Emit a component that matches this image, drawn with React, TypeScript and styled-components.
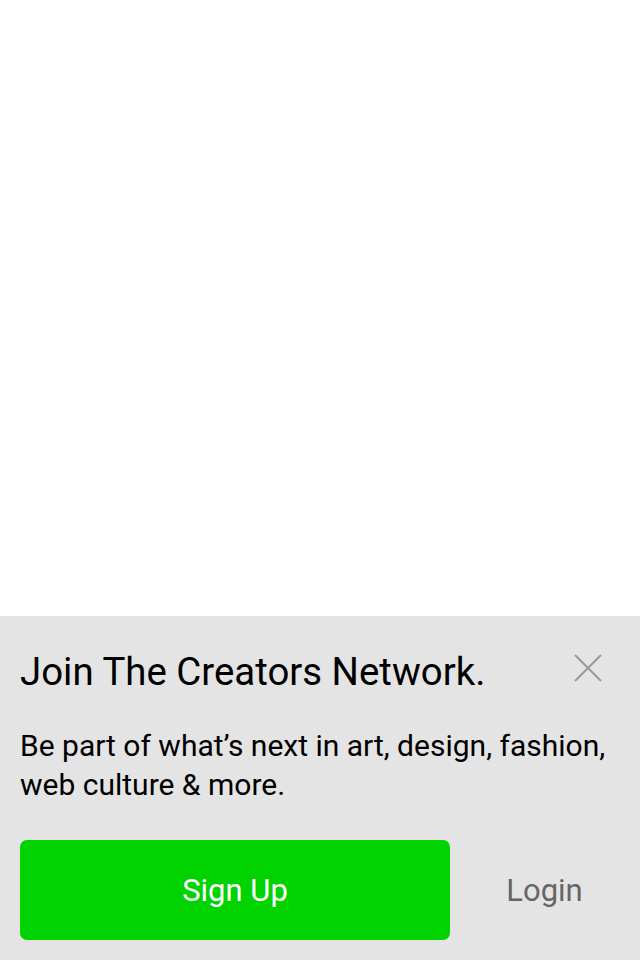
import React from "react";
import styled, { createGlobalStyle } from "styled-components";

const Global = createGlobalStyle`
  html, body { margin: 0; padding: 0; background: #ffffff; }
  body { font-family: Roboto, "Liberation Sans", sans-serif; }
  * { box-sizing: border-box; }
`;

const Page = styled.div`
  width: 640px;
  height: 960px;
  display: flex;
  flex-direction: column;
  justify-content: flex-end;
  background: #ffffff;
`;

const Banner = styled.section`
  background: #e4e4e4;
  height: 344px;
  padding: 32px 20px 20px 20px;
  display: flex;
  flex-direction: column;
`;

const Header = styled.div`
  display: flex;
  align-items: flex-start;
  justify-content: space-between;
`;

const Title = styled.h1`
  margin: 0;
  font-weight: 400;
  font-size: 38.4px;
  line-height: 48px;
  color: #000;
  letter-spacing: 0;
`;

const Close = styled.button`
  border: 0;
  background: none;
  padding: 0;
  margin: 6px 18px 0 0;
  width: 28px;
  height: 28px;
  cursor: pointer;
  display: flex;
`;

const Body = styled.p`
  margin: 30px 0 0 0;
  font-size: 30px;
  line-height: 39px;
  color: #000;
`;

const Actions = styled.div`
  margin-top: 36px;
  display: flex;
  align-items: center;
`;

const SignUp = styled.button`
  width: 430px;
  height: 100px;
  border: 0;
  border-radius: 7px;
  background: #00d300;
  color: #fff;
  font-family: inherit;
  font-size: 31px;
  cursor: pointer;
`;

const Login = styled.button`
  flex: 1;
  border: 0;
  background: none;
  color: #666;
  font-family: inherit;
  font-size: 31px;
  padding: 0 0 0 19px;
  cursor: pointer;
`;

export default function App() {
  return (
    <>
      <Global />
      <Page>
        <Banner>
          <Header>
            <Title>Join The Creators Network.</Title>
            <Close aria-label="Close">
              <svg width="28" height="28" viewBox="0 0 28 28">
                <path d="M1 1 L27 27 M27 1 L1 27" stroke="#9a9a9a" strokeWidth="2" fill="none" />
              </svg>
            </Close>
          </Header>
          <Body>Be part of what’s next in art, design, fashion, web culture &amp; more.</Body>
          <Actions>
            <SignUp>Sign Up</SignUp>
            <Login>Login</Login>
          </Actions>
        </Banner>
      </Page>
    </>
  );
}
